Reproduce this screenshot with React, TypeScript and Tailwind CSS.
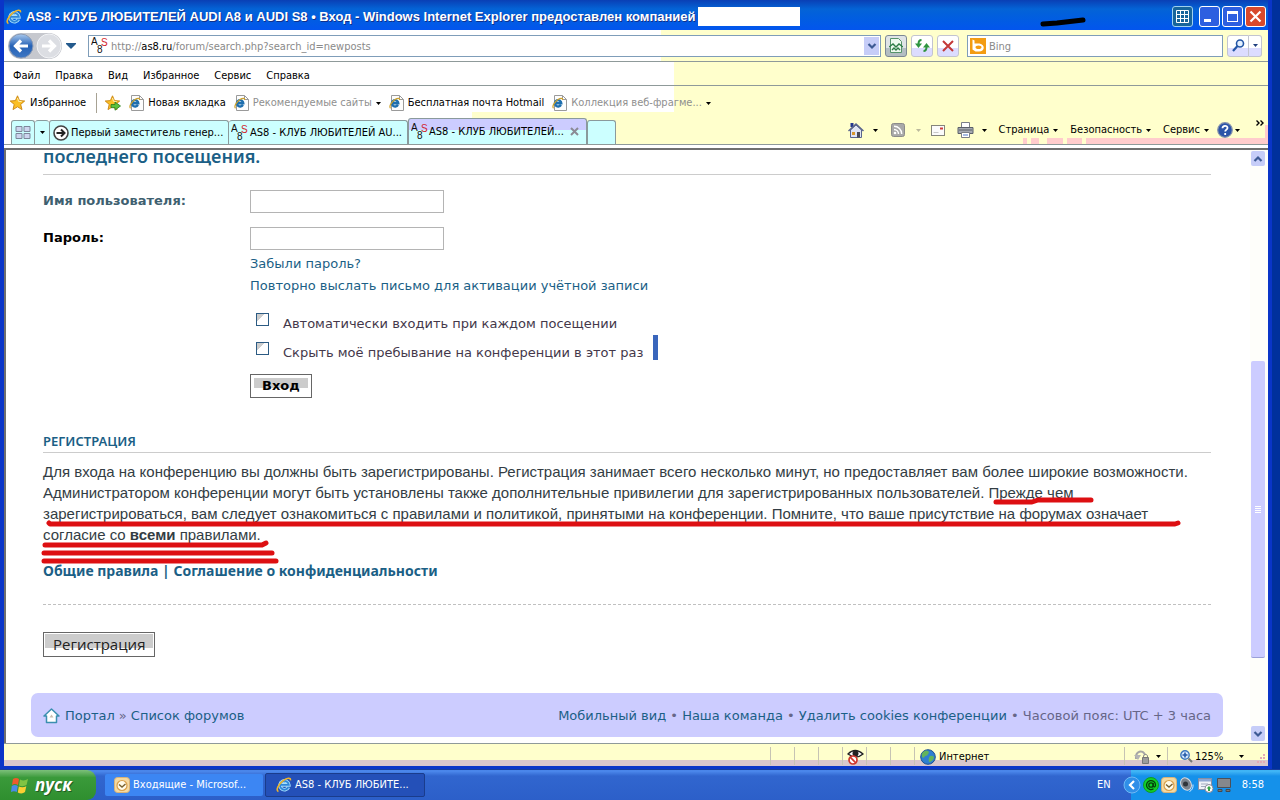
import type { ReactNode } from 'react'

const ui = "font-['DejaVu_Sans_Condensed','DejaVu_Sans',sans-serif]"

function Caret({ className = 'text-black' }: { className?: string }) {
  return (
    <svg width="5" height="3" viewBox="0 0 5 3" className={`shrink-0 ${className}`}>
      <path d="M0 0h5L2.5 3z" fill="currentColor" />
    </svg>
  )
}

function Chevron({ up = false }: { up?: boolean }) {
  return (
    <svg width="10" height="8" viewBox="0 0 10 8" className={up ? 'rotate-180' : ''}>
      <path d="M1.5 2L5 5.5 8.5 2" fill="none" stroke="#3d5a94" strokeWidth="2.2" />
    </svg>
  )
}

function IeGlyph({ size = 16 }: { size?: number }) {
  return (
    <svg width={size} height={size} viewBox="0 0 16 16" className="shrink-0">
      <path d="M12.4 10.2A4.400 4.400 0 1 1 12.800 7.900H5" fill="none" stroke="#a5defc" strokeWidth="3.600" />
      <path d="M12.4 10.2A4.400 4.400 0 1 1 12.800 7.900H5" fill="none" stroke="#2f86d8" strokeWidth="1.800" />
      <path d="M2.4 14.6C-.6 13 2.5 7.2 7.2 3.6 11 .8 15 .2 14.4 3.4" fill="none" stroke="#f0b429" strokeWidth="1.6" />
    </svg>
  )
}

function IePage() {
  return (
    <svg width="15" height="16" viewBox="0 0 15 16" className="shrink-0">
      <path d="M2.5.5h8l4 4v11h-12z" fill="#fdfdfd" stroke="#9a9a9a" />
      <path d="M10.5.5v4h4" fill="none" stroke="#9a9a9a" />
      <path d="M8.900 9.900A3.200 3.200 0 1 1 9.300 8.200H3.500" fill="none" stroke="#1f6fae" strokeWidth="2.400" />
      <path d="M1.500 13.200C-.3 11.500 2.500 7 6 4.500 8.500 3 11 2.800 10.600 5" fill="none" stroke="#cfa22a" strokeWidth="1.200" />
    </svg>
  )
}

function SiteIcon() {
  return (
    <svg width="17" height="17" viewBox="0 0 17 17" className="shrink-0" fontFamily="Liberation Sans, sans-serif">
      <text x="0" y="8" fontSize="10" fill="#111">A</text>
      <text x="6" y="16" fontSize="10" fill="#111">8</text>
      <text x="10" y="9" fontSize="10" fill="#d2232a">S</text>
    </svg>
  )
}

function Star({ add = false }: { add?: boolean }) {
  return (
    <svg width="16" height="16" viewBox="0 0 16 16" className="shrink-0">
      <path d="M7.500.8l2 4.800 5.200.4-4 3.400 1.300 5.200-4.500-2.800L3 14.600l1.200-5.200-4-3.400 5.200-.4z" fill="#fbbf24" stroke="#c98512" strokeWidth=".9" />
      <path d="M7.500 3l1 3.300 3.200.3" fill="none" stroke="#fff2b0" />
      {add && <path d="M6 9.500h4V7l5.500 4-5.500 4.200v-2.500H6z" fill="#5cc13b" stroke="#2c7a1c" strokeWidth=".8" />}
    </svg>
  )
}

function ArrowBall({ forward = false }: { forward?: boolean }) {
  return (
    <svg width="26" height="26" viewBox="0 0 26 26" className="shrink-0">
      <defs>
        <linearGradient id="ball" x1="0" y1="0" x2="0" y2="1">
          <stop offset="0" stopColor="#a9c9ee" />
          <stop offset=".5" stopColor="#2561b5" />
          <stop offset="1" stopColor="#3f78c4" />
        </linearGradient>
      </defs>
      <circle cx="13" cy="13" r="12" fill={forward ? '#dcdee3' : 'url(#ball)'} stroke={forward ? '#f2f3f6' : '#8b9bb5'} />
      {forward ? (
        <path d="M6 13h12M13 7.500l5.500 5.500-5.500 5.500" fill="none" stroke="#fff" strokeWidth="3.200" />
      ) : (
        <path d="M20 13H8M13 7.500L7.500 13l5.500 5.500" fill="none" stroke="#fff" strokeWidth="3.200" />
      )}
    </svg>
  )
}

function HouseIcon() {
  return (
    <svg width="16" height="17" viewBox="0 0 16 17" className="shrink-0">
      <path d="M2.500 1h3v4h-3z" fill="#23378f" />
      <path d="M2.500 8L8 3l5.500 5v7.500h-11z" fill="#dfe4f3" stroke="#59648c" />
      <path d="M.5 9L8 2l7.500 7" fill="none" stroke="#59648c" strokeWidth="1.500" />
      <path d="M9 10h3v5.500H9z" fill="#4b4a55" />
      <path d="M4 10h3v3H4z" fill="#d8962c" />
    </svg>
  )
}

function FeedIcon() {
  return (
    <svg width="14" height="14" viewBox="0 0 14 14" className="shrink-0">
      <rect x=".5" y=".5" width="13" height="13" rx="2" fill="#a9a9a9" stroke="#8b8b8b" />
      <circle cx="4" cy="10" r="1.300" fill="#fff" />
      <path d="M3 6.500a4.500 4.500 0 0 1 4.500 4.500M3 3.300A7.700 7.700 0 0 1 10.700 11" fill="none" stroke="#fff" strokeWidth="1.400" />
    </svg>
  )
}

function MailIcon() {
  return (
    <svg width="14" height="11" viewBox="0 0 14 11" className="shrink-0">
      <rect x=".5" y=".5" width="13" height="10" fill="#fbfbfb" stroke="#85857c" />
      <path d="M9 2.500h3v2H9z" fill="#d13b3b" />
      <path d="M2.500 7.500h5" stroke="#c8c8c8" />
    </svg>
  )
}

function PrinterIcon() {
  return (
    <svg width="17" height="16" viewBox="0 0 17 16" className="shrink-0">
      <path d="M4.500.5h8v6h-8z" fill="#fff" stroke="#7b7f87" />
      <path d="M1 5.500h15v6H1z" fill="#a5a9b1" stroke="#5b606a" />
      <path d="M2 8h13" stroke="#5b6069" />
      <path d="M4.500 10.500h8v5h-8z" fill="#fff" stroke="#7b7f87" />
      <path d="M6 13h5" stroke="#4c79c8" />
    </svg>
  )
}

function HelpIcon() {
  return (
    <svg width="16" height="16" viewBox="0 0 16 16" className="shrink-0">
      <circle cx="8" cy="8" r="7.300" fill="#2c54a8" stroke="#8793ad" strokeWidth="1.200" />
      <path d="M5.500 6.300C5.500 3 10.700 3.100 10.500 6c-.1 1.600-2.300 1.800-2.300 3.600M8.200 11v2" fill="none" stroke="#fff" strokeWidth="1.800" />
    </svg>
  )
}

function OutlookIcon() {
  return (
    <svg width="16" height="16" viewBox="0 0 16 16" className="shrink-0">
      <rect x=".5" y=".5" width="15" height="15" rx="3" fill="#f5d9a0" stroke="#d9b377" />
      <circle cx="8" cy="8.500" r="5" fill="#fffbe9" stroke="#d9a04c" strokeWidth="1.200" />
      <path d="M5 7.500l3 2.500 3.500-3" fill="none" stroke="#7a6230" strokeWidth="1.400" />
    </svg>
  )
}

function TitleBar() {
  const btn = 'flex h-[21px] w-[21px] items-center justify-center rounded-[3px] border'
  return (
    <header className="flex h-[30px] shrink-0 items-center bg-linear-to-b from-[#0a3fb5] from-0% via-[#0463d6] via-30% to-[#0355ee] pt-[3px] pr-[2px] pl-[2px]">
      <IeGlyph />
      <h1 className="ml-1 text-[13px] leading-5 font-bold whitespace-nowrap text-white font-['Liberation_Sans',sans-serif] [text-shadow:1px_1px_#10308a]">
        AS8 - КЛУБ ЛЮБИТЕЛЕЙ AUDI A8 и AUDI S8 • Вход - Windows Internet Explorer предоставлен компанией
      </h1>
      <span className="ml-[2px] h-[19px] w-[102px] shrink-0 bg-white" />
      <svg width="48" height="12" viewBox="0 0 48 12" className="mt-[10px] mr-[84px] ml-auto shrink-0">
        <path d="M3 8l14-1 26-3" fill="none" stroke="#000" strokeWidth="5" strokeLinecap="round" />
      </svg>
      <div className="flex shrink-0 gap-[2px]">
        <button aria-label="Сетка" className={`${btn} mr-[4px] border-[#9fd0ee] bg-[#17659b]`}>
          <svg width="13" height="13" viewBox="0 0 13 13">
            <path d="M.5.5h12v12H.5zM4.500.5v12M8.500.5v12M.5 4.500h12M.5 8.500h12" fill="none" stroke="#fff" />
          </svg>
        </button>
        <button aria-label="Свернуть" className={`${btn} border-white bg-[#2d5fe0]`}>
          <span className="mt-2 mr-1 h-[3px] w-[7px] bg-white" />
        </button>
        <button aria-label="Развернуть" className={`${btn} border-white bg-[#2d5fe0]`}>
          <span className="h-[11px] w-[11px] border border-t-[3px] border-white" />
        </button>
        <button aria-label="Закрыть" className={`${btn} border-white bg-[#d8492c]`}>
          <svg width="13" height="13" viewBox="0 0 13 13">
            <path d="M1.500 1.500l10 10M11.500 1.500l-10 10" stroke="#fff" strokeWidth="2.200" />
          </svg>
        </button>
      </div>
    </header>
  )
}

function AddressRow() {
  const btn = 'flex h-[22px] shrink-0 items-center justify-center rounded-[3px] border bg-linear-to-b from-60%'
  const plain = 'border-[#c2c4d0] from-white to-[#dcdcff] to-60%'
  return (
    <div className="flex h-8 items-center border-b border-[#8f9a9a] bg-linear-to-r from-white from-52% to-[#ffffcc] to-52% pr-[6px] pl-1">
      <div className="flex rounded-full bg-[#c6c8ce]">
        <button aria-label="Назад"><ArrowBall /></button>
        <button aria-label="Вперёд" className="ml-[2px]"><ArrowBall forward /></button>
      </div>
      <button aria-label="Журнал" className="ml-1">
        <svg width="10" height="6" viewBox="0 0 10 6"><path d="M0 0h10v1L5 6 0 1z" fill="#245a8d" /></svg>
      </button>
      <div className="ml-3 flex h-[22px] flex-1 items-center border border-[#7f9db9] bg-white pl-[2px]">
        <SiteIcon />
        <label htmlFor="address" className="ml-[3px] pt-[2px] text-[11px] leading-4 text-[#8a8a8a]">
          http://<span className="text-black">as8.ru</span>/forum/search.php?search_id=newposts
        </label>
        <input id="address" type="text" className="min-w-0 flex-1 outline-none" />
        <button aria-label="Адреса" className="mr-px flex h-[18px] w-[15px] items-center justify-center bg-[#c6cdf8]">
          <Chevron />
        </button>
      </div>
      <button aria-label="Режим совместимости" className={`${btn} ml-1 w-[22px] border-[#7c8894] from-[#dfe4e6] to-[#b3bec2] to-60%`}>
        <svg width="14" height="15" viewBox="0 0 14 15">
          <path d="M1.500.5h8l3 3v11h-11z" fill="#eef9ee" stroke="#56936a" />
          <path d="M0 9l4-3 3 3 3-3 4 3M3 12l2-2 2 2 2-2 2 2" fill="none" stroke="#2d7c46" strokeWidth="1.400" />
        </svg>
      </button>
      <button aria-label="Обновить" className={`${btn} ${plain} ml-1 w-[22px]`}>
        <svg width="15" height="13" viewBox="0 0 15 13">
          <path d="M6.500 1C3.500 1 3.500 3 3.500 5" fill="none" stroke="#2e9440" strokeWidth="2" />
          <path d="M0 4.500h7L3.500 9z" fill="#2e9440" />
          <path d="M8.500 12c3 0 3-2 3-4" fill="none" stroke="#2e9440" strokeWidth="2" />
          <path d="M8 8.500h7L11.500 4z" fill="#2e9440" />
        </svg>
      </button>
      <button aria-label="Остановить" className={`${btn} ${plain} ml-1 w-[22px]`}>
        <svg width="12" height="12" viewBox="0 0 12 12">
          <path d="M1 1l10 10M11 1L1 11" stroke="#c33838" strokeWidth="2" />
        </svg>
      </button>
      <div className="ml-2 flex h-[22px] w-[256px] items-center border border-[#7f9db9] bg-white pl-[2px]">
        <svg width="16" height="16" viewBox="0 0 16 16" className="shrink-0">
          <path d="M0 0h16v16H0z" fill="#f39c12" />
          <path d="M2.500 1.500l2 1v3h5c6 1 5.500 8-.5 8H5.500l-3-2z" fill="#fff" />
          <ellipse cx="8.500" cy="9.300" rx="3" ry="1.800" fill="#f39c12" />
        </svg>
        <input type="text" aria-label="Поиск Bing" placeholder="Bing" className="ml-[3px] min-w-0 flex-1 pt-[2px] text-[11px] leading-4 outline-none placeholder:text-[#8a8a8a]" />
      </div>
      <div className="ml-1 flex">
        <button aria-label="Найти" className={`${btn} ${plain} w-[22px] rounded-r-none`}>
          <svg width="13" height="13" viewBox="0 0 13 13">
            <circle cx="8" cy="4.500" r="3.500" fill="#e5f1ff" stroke="#2456a6" strokeWidth="1.600" />
            <path d="M5.500 7L1 12" stroke="#2456a6" strokeWidth="2.200" />
          </svg>
        </button>
        <button aria-label="Параметры поиска" className={`${btn} ${plain} w-[13px] rounded-l-none border-l-0`}><Caret className="text-[#1f3f7f]" /></button>
      </div>
    </div>
  )
}

function MenuRow() {
  return (
    <nav className="flex h-6 items-center gap-[15px] border-b border-[#8f9a9a] bg-linear-to-r from-white from-53% to-[#ffffcc] to-53% pt-1 pl-[9px] text-[11px] leading-4">
      {['Файл', 'Правка', 'Вид', 'Избранное', 'Сервис', 'Справка'].map((item) => (
        <button key={item}>{item}</button>
      ))}
    </nav>
  )
}

function Favorite({ children, muted = false, caret = false }: { children: ReactNode; muted?: boolean; caret?: boolean }) {
  return (
    <a href="#" className={`flex items-center gap-1 whitespace-nowrap ${muted ? 'text-[#8f8f8f]' : ''}`}>
      <IePage />
      {children}
      {caret && <Caret className="text-black" />}
    </a>
  )
}

function FavoritesRow() {
  return (
    <div className="relative flex h-8 items-center bg-linear-to-r from-white from-53% to-[#ffffcc] to-53% pt-[2px] pl-[6px] text-[11px] leading-4">
      <span className="absolute right-0 bottom-0 h-[6px] w-[63%] bg-[#ffffcc]" />
      <button className="flex items-center gap-1"><Star />Избранное</button>
      <span className="mr-2 ml-[10px] h-5 w-px bg-[#a7a294]" />
      <button aria-label="Добавить в избранное" className="mr-2"><Star add /></button>
      <div className="flex gap-2">
        <Favorite>Новая вкладка</Favorite>
        <Favorite muted caret>Рекомендуемые сайты</Favorite>
        <Favorite>Бесплатная почта Hotmail</Favorite>
        <Favorite muted caret>Коллекция веб-фрагме...</Favorite>
      </div>
    </div>
  )
}

function TabRow() {
  const tab = 'flex h-6 shrink-0 items-center rounded-t-[3px] border border-b-0 border-[#8a9a9c] bg-[#ccffff] whitespace-nowrap'
  return (
    <div className="relative flex h-[27px] items-end border-b border-[#8f9a9a] bg-linear-to-r from-white from-37% to-[#ffffcc] to-37% pl-[7px] text-[11px] leading-4">
      <span className="absolute right-0 bottom-0 h-[6px] w-[182px] bg-[#ffcccc]" />
      <span className="absolute right-[186px] bottom-0 h-[6px] w-[15px] bg-[#ffcccc]" />
      <span className="absolute right-[205px] bottom-0 h-[6px] w-4 bg-[#ffcccc]" />
      <span className="absolute right-[229px] bottom-0 h-[6px] w-2 bg-[#ffcccc]" />
      <span className="absolute right-[241px] bottom-0 h-[6px] w-1 bg-[#ffcccc]" />
      <span className="absolute right-0 bottom-0 h-[19px] w-[3px] bg-[#ffcccc]" />
      <button aria-label="Быстрые вкладки" className={`${tab} w-6 justify-center`}>
        <svg width="16" height="13" viewBox="0 0 16 13">
          <path d="M1 .5h6v5H1zM9 .5h6v5H9zM1 7.500h6v5H1zM9 7.500h6v5H9z" fill="#ccd4ee" stroke="#7d869a" />
        </svg>
      </button>
      <button aria-label="Список вкладок" className={`${tab} w-[14px] justify-center border-x-0`}><Caret /></button>
      <button className={`${tab} w-[180px] gap-[2px] pl-[3px]`}>
        <svg width="16" height="16" viewBox="0 0 16 16" className="shrink-0">
          <circle cx="8" cy="8" r="7" fill="#fff" stroke="#444" strokeWidth="1.600" />
          <path d="M3.500 8h8M8 4.500L11.500 8 8 11.500" fill="none" stroke="#222" strokeWidth="2" />
        </svg>
        Первый заместитель генер...
      </button>
      <button className={`${tab} w-[179px] gap-[2px] border-l-0 pl-[2px]`}>
        <SiteIcon />AS8 - КЛУБ ЛЮБИТЕЛЕЙ AU...
      </button>
      <div className="flex h-[26px] w-[179px] shrink-0 items-center rounded-t-[3px] border border-b-0 border-[#8a9a9c] bg-linear-to-b from-[#ccccff] from-45% to-[#ccffff] to-45% whitespace-nowrap">
        <button className="flex items-center gap-px pl-[2px]"><SiteIcon />AS8 - КЛУБ ЛЮБИТЕЛЕЙ...</button>
        <button aria-label="Закрыть вкладку" className="mr-[7px] ml-auto">
          <svg width="9" height="9" viewBox="0 0 9 9"><path d="M1 1l7 7M8 1L1 8" stroke="#8b8b95" strokeWidth="2" /></svg>
        </button>
      </div>
      <button aria-label="Новая вкладка" className={`${tab} w-[29px]`} />
      <div className="relative mb-1 ml-auto flex shrink-0 items-center pr-1">
        <button aria-label="Домой" className="flex items-center gap-[9px]"><HouseIcon /><Caret /></button>
        <button aria-label="Веб-каналы" className="ml-[13px] flex items-center gap-[11px]"><FeedIcon /><Caret className="text-[#bbb99c]" /></button>
        <button aria-label="Почта" className="ml-[10px]"><MailIcon /></button>
        <button aria-label="Печать" className="ml-3 flex items-center gap-2"><PrinterIcon /><Caret /></button>
        <button className="ml-3 flex items-center gap-1">Страница<Caret /></button>
        <button className="ml-3 flex items-center gap-1">Безопасность<Caret /></button>
        <button className="ml-3 flex items-center gap-1">Сервис<Caret /></button>
        <button aria-label="Справка" className="ml-2 flex items-center gap-[2px]"><HelpIcon /><Caret /></button>
        <button aria-label="Ещё" className="mb-[14px] ml-4">
          <svg width="8" height="6" viewBox="0 0 8 6"><path d="M.5.5L3 3 .5 5.500M4.500.5L7 3 4.500 5.500" fill="none" stroke="#000" strokeWidth="1.400" /></svg>
        </button>
      </div>
    </div>
  )
}

const field = 'h-[23px] w-[194px] border border-[#b4b4b4] bg-white px-1 outline-none'
const link = 'text-[#1b5f86]'
const formButton = 'border border-[#666]'
const formButtonFace = 'block bg-linear-to-b from-[#cccccc] from-65% to-white to-65%'

function LoginForm() {
  return (
    <form className="pt-[15px] text-[13px]">
      <div className="flex items-start">
        <label htmlFor="username" className="w-[207px] leading-[22px] font-bold text-[#3e6070]">Имя пользователя:</label>
        <input id="username" type="text" className={field} />
      </div>
      <div className="mt-[14px] flex items-start">
        <label htmlFor="password" className="w-[207px] leading-[22px] font-bold text-black">Пароль:</label>
        <div className="flex flex-col items-start">
          <input id="password" type="password" className={field} />
          <a href="#" className={`mt-[3px] leading-[22px] ${link}`}>Забыли пароль?</a>
          <a href="#" className={`leading-[22px] ${link}`}>Повторно выслать письмо для активации учётной записи</a>
          <div className="mt-3 pl-[6px] text-[#44384a]">
            {['Автоматически входить при каждом посещении', 'Скрыть моё пребывание на конференции в этот раз'].map((text, i) => (
              <label key={text} className="flex items-start gap-[14px] leading-[29px] whitespace-nowrap">
                <input type="checkbox" className="mt-1 h-[13px] w-[13px] appearance-none border border-[#2c5b83] bg-linear-to-br from-[#cccccc] from-35% to-white to-35%" />
                {text}
                {i === 1 && <span className="-mt-[3px] -ml-1 h-[25px] w-[5px] bg-[#3a66bc]" />}
              </label>
            ))}
          </div>
          <button type="submit" className={`mt-[7px] p-[3px] ${formButton} font-bold text-black`}>
            <span className={`${formButtonFace} px-2 leading-4`}>Вход</span>
          </button>
        </div>
      </div>
    </form>
  )
}

function Registration() {
  return (
    <section className="font-['Noto_Sans',sans-serif]">
      <h3 className="mt-8 border-b border-[#cccccc] text-[13px] leading-[22px] font-semibold text-[#1b5f86]">РЕГИСТРАЦИЯ</h3>
      <div className="relative pt-2 text-[15px] leading-[21px] whitespace-nowrap text-[#333d44] font-['Liberation_Sans',sans-serif]">
        <p>
          Для входа на конференцию вы должны быть зарегистрированы. Регистрация занимает всего несколько минут, но предоставляет вам более широкие возможности.
          <br />
          Администратором конференции могут быть установлены также дополнительные привилегии для зарегистрированных пользователей. Прежде чем
          <br />
          зарегистрироваться, вам следует ознакомиться с правилами и политикой, принятыми на конференции. Помните, что ваше присутствие на форумах означает
          <br />
          согласие со <b>всеми</b> правилами.
        </p>
        {/* hand-drawn marks over the text */}
        <svg width="1168" height="112" viewBox="0 0 1168 112" className="pointer-events-none absolute top-0 left-0 overflow-visible">
          <g fill="none" stroke="#dd0f12" strokeWidth="5" strokeLinecap="round" strokeLinejoin="round">
            <path d="M953 49h36l6-2h53" />
            <path d="M6 70l1 1h1125l3-1" />
            <path d="M2 92h217l4-2" />
            <path d="M1 100h228" />
            <path d="M1 108h232" />
          </g>
        </svg>
      </div>
      <p className="mt-[15px] text-[14px] leading-[21px] font-bold text-[#1b5f86]">
        <a href="#">Общие правила</a> | <a href="#">Соглашение о конфиденциальности</a>
      </p>
      <div className="mt-[23px] border-t border-dashed border-[#c0c0c0] pt-[27px] font-['DejaVu_Sans',sans-serif]">
        <button className={`p-px ${formButton} text-[15px] text-[#222]`}>
          <span className={`${formButtonFace} px-2 leading-[21px] font-['Open_Sans','Noto_Sans',sans-serif]`}>Регистрация</span>
        </button>
      </div>
    </section>
  )
}

function PageFooter() {
  return (
    <footer className="mt-9 flex h-11 items-center justify-between rounded-[7px] bg-[#ccccff] px-3 pt-[2px] text-[13px] leading-5 whitespace-nowrap text-[#666688]">
      <div className="flex items-center">
        <svg width="17" height="16" viewBox="0 0 17 16" className="mr-[5px]">
          <path d="M8.500 1L1 8h2.500v6.500h10V8H16z" fill="#fff" stroke="#3b8fb0" strokeWidth="1.500" strokeLinejoin="round" />
          <path d="M6.500 9.500l2-3 2 3z" fill="#c9bdb0" />
        </svg>
        <a href="#" className={link}>Портал</a>
        <span className="mx-1">»</span>
        <a href="#" className={link}>Список форумов</a>
      </div>
      <p>
        <a href="#" className={link}>Мобильный вид</a> • <a href="#" className={link}>Наша команда</a> • <a href="#" className={link}>Удалить cookies конференции</a> • Часовой пояс: UTC + 3 часа
      </p>
    </footer>
  )
}

function Scrollbar() {
  const btn = 'flex h-[15px] w-[14px] shrink-0 items-center justify-center rounded-[2px] bg-[#c6cdf8]'
  return (
    <div className="flex w-[18px] shrink-0 flex-col items-center bg-[#fefefa] pt-px pr-[3px] pb-[2px]">
      <button aria-label="Вверх" className={btn}><Chevron up /></button>
      <div className="flex w-full flex-1 flex-col items-center">
        <span className="grow-[198]" />
        <span className="flex w-[14px] grow-[293] flex-col items-center justify-center gap-px rounded-[2px] border-b border-[#9a9fd8] bg-[#ccccff]">
          {[0, 1, 2, 3].map((n) => <i key={n} className="h-px w-[6px] bg-white" />)}
        </span>
        <span className="grow-[69]" />
      </div>
      <button aria-label="Вниз" className={btn}><Chevron /></button>
    </div>
  )
}

function StatusBar() {
  const cell = 'flex h-[18px] items-center border-l border-[#c6c3b4] pt-[2px]'
  return (
    <div className="flex h-[23px] shrink-0 items-center justify-end border-t border-[#8f9a9a] bg-linear-to-b from-[#ffffcc] from-75% to-[#d9c6cc] to-75% pt-px text-[11px] leading-4">
      <span className={`${cell} w-6`} />
      <span className={`${cell} w-6`} />
      <span className={`${cell} w-6`} />
      <span className={`${cell} w-6 pl-1`}>
        <svg width="17" height="16" viewBox="0 0 17 16">
          <path d="M1 5q7-7 15 0-7 6-15 0z" fill="#fff" stroke="#222" strokeWidth="1.300" />
          <circle cx="8.500" cy="4.500" r="3" fill="#222" />
          <circle cx="6" cy="11" r="4" fill="#fff" stroke="#d2372e" strokeWidth="1.700" />
          <path d="M3.200 8.200l5.600 5.600" stroke="#d2372e" strokeWidth="1.700" />
        </svg>
      </span>
      <span className={`${cell} w-6`} />
      <span className={`${cell} w-6`} />
      <span className={`${cell} w-[210px] gap-[3px] pl-[5px]`}>
        <svg width="16" height="16" viewBox="0 0 16 16">
          <circle cx="8" cy="8" r="7.300" fill="#2f7fd0" stroke="#1c4f90" />
          <path d="M3 3q4-3 6 0-1 4-4 4-1 3-3 1-1-3 1-5zM10 7q4-1 4 2-2 4-5 4-1-4 1-6z" fill="#63b45a" />
        </svg>
        Интернет
      </span>
      <button aria-label="Защищённый режим" className={`${cell} w-[43px] gap-[6px] pl-[9px]`}>
        <svg width="16" height="14" viewBox="0 0 16 14">
          <path d="M2 9C1 1 9-1 11 5" fill="none" stroke="#a6a6a6" strokeWidth="2" />
          <path d="M0 5l4 5 3-5z" fill="#b5b5b5" />
          <path d="M9.500 8V5.500q2.500-2.500 4 0V8" fill="none" stroke="#888" />
          <path d="M8.500 7.500h6v6h-6z" fill="#9c9c9c" stroke="#777" />
        </svg>
        <Caret />
      </button>
      <button className={`${cell} w-[101px] pl-3`}>
        <svg width="13" height="13" viewBox="0 0 13 13">
          <circle cx="5" cy="5" r="4.200" fill="#d4e9ff" stroke="#3b76be" strokeWidth="1.400" />
          <path d="M5 2.500v5M2.500 5h5" stroke="#245aa5" strokeWidth="1.600" />
          <path d="M8.500 8.500l3.500 3.500" stroke="#777" strokeWidth="2" />
        </svg>
        <span className="ml-[2px]">125%</span>
        <Caret className="ml-4 text-black" />
        <svg width="10" height="12" viewBox="0 0 10 12" className="mt-1 ml-3">
          <path d="M7 1h2v2H7zM4 4h2v2H4zM7 4h2v2H7zM1 8h2v2H1zM4 8h2v2H4zM7 8h2v2H7z" fill="#e3a9b6" />
        </svg>
      </button>
    </div>
  )
}

function Taskbar() {
  return (
    <footer className="flex h-[31px] shrink-0 items-center border-t border-[#173c9c] bg-linear-to-b from-[#4a86ea] from-5% via-[#3166cf] via-20% to-[#2c5fc9] text-[11px] leading-4 text-white">
      <button className="flex h-full w-[96px] items-center gap-[6px] rounded-r-[9px] bg-linear-to-b from-[#7cc07a] from-0% via-[#3a9a3a] via-25% to-[#2f8f2f] pl-[11px] text-[17px] font-bold text-white italic font-['Open_Sans','Noto_Sans',sans-serif] [text-shadow:1px_1px_#235c23]">
        <svg width="18" height="17" viewBox="0 0 18 17">
          <path d="M2 2q3-2 6 0L7 8Q4 6 1 8z" fill="#ee5a2c" />
          <path d="M9 2.500q4 2 8-.5l-1.500 6Q12 10 8 8.500z" fill="#80c443" />
          <path d="M.8 9q3-2 6 0l-1 6Q3 13.500 0 15z" fill="#4a8be8" />
          <path d="M7.800 9.500q4 1.500 7.500-.3L14 15q-3 2.500-7.200.5z" fill="#fbcf33" />
        </svg>
        пуск
      </button>
      <button className="ml-[9px] flex h-[22px] w-[158px] items-center gap-[3px] rounded-[2px] bg-[#3c86f3] pl-[9px]">
        <OutlookIcon />Входящие - Microsof...
      </button>
      <button className="ml-[2px] flex h-6 w-[160px] items-center gap-[3px] rounded-[2px] border border-[#1a3c8c] bg-[#2450b8] pl-[10px]">
        <IeGlyph />AS8 - КЛУБ ЛЮБИТЕ...
      </button>
      <span className="mr-5 ml-auto">EN</span>
      <div className="flex h-full items-center gap-[2px] bg-linear-to-b from-[#3fb4f5] from-5% to-[#1591ea] to-20% pr-4">
        <button aria-label="Показать значки" className="-ml-2">
          <svg width="18" height="18" viewBox="0 0 18 18">
            <circle cx="9" cy="9" r="8" fill="#2f8fe8" stroke="#6fb8f4" />
            <path d="M11 5L7 9l4 4" fill="none" stroke="#fff" strokeWidth="2.200" />
          </svg>
        </button>
        <svg width="16" height="16" viewBox="0 0 16 16">
          <circle cx="8" cy="8" r="7.500" fill="#12cf2a" stroke="#119a24" />
          <circle cx="8" cy="8" r="2.200" fill="none" stroke="#063f0b" strokeWidth="1.300" />
          <path d="M10.200 6v3.500q2.300 1 2.300-1.500a4.500 4.500 0 1 0-2 3.800" fill="none" stroke="#063f0b" strokeWidth="1.300" />
        </svg>
        <OutlookIcon />
        <svg width="16" height="16" viewBox="0 0 16 16">
          <ellipse cx="7" cy="7" rx="5" ry="6.500" fill="#7b828c" stroke="#d8dce2" transform="rotate(-30 7 7)" />
          <circle cx="6.500" cy="7" r="2.500" fill="#30343b" />
          <path d="M10.500 14.500q4-2 3.500-7" fill="none" stroke="#cfe6ff" />
        </svg>
        <svg width="17" height="16" viewBox="0 0 17 16">
          <path d="M1.500 1.500h13v11h-13z" fill="#f0f2f8" stroke="#8790a5" />
          <path d="M2 2h12v2.500H2z" fill="#8fa6d2" />
          <path d="M4 7h7M4 9.500h5" stroke="#a1abc0" />
          <circle cx="12" cy="11.500" r="4" fill="#fff" stroke="#889" />
          <path d="M9.500 11.500L12 9l2.500 2.500H13V14h-2v-2.500z" fill="#35a544" />
        </svg>
        <svg width="16" height="16" viewBox="0 0 16 16">
          <path d="M1.500 1.500h13v9h-13z" fill="#85888c" stroke="#4c5058" />
          <path d="M2 12.500h4v2H2zM10 12.500h4v2h-4z" fill="#777" stroke="#44484f" />
        </svg>
        <time className="ml-2">8:58</time>
      </div>
    </footer>
  )
}

export default function App() {
  return (
    <div className={`flex h-screen flex-col overflow-hidden bg-[#00309c] text-black ${ui}`}>
      <div className="mr-2 flex min-h-0 flex-1 flex-col border-r-4 border-b-[3px] border-l-4 border-[#0a35c8] bg-white">
        <TitleBar />
        <AddressRow />
        <MenuRow />
        <FavoritesRow />
        <TabRow />
        <div className="mt-[3px] flex min-h-0 flex-1 overflow-hidden border-t-2 border-l-2 border-[#6f6f6f]">
          <main className="min-w-0 flex-1 overflow-hidden pr-[27px] pl-[25px] font-['DejaVu_Sans',sans-serif]">
            <div className="px-3">
              <h2 className="border-b border-[#cccccc] pb-3 text-[18px] leading-3 font-semibold text-[#1b5f86] font-['Noto_Sans',sans-serif]">
                последнего посещения.
              </h2>
              <LoginForm />
              <Registration />
            </div>
            <PageFooter />
          </main>
          <Scrollbar />
        </div>
        <StatusBar />
      </div>
      <Taskbar />
    </div>
  )
}
